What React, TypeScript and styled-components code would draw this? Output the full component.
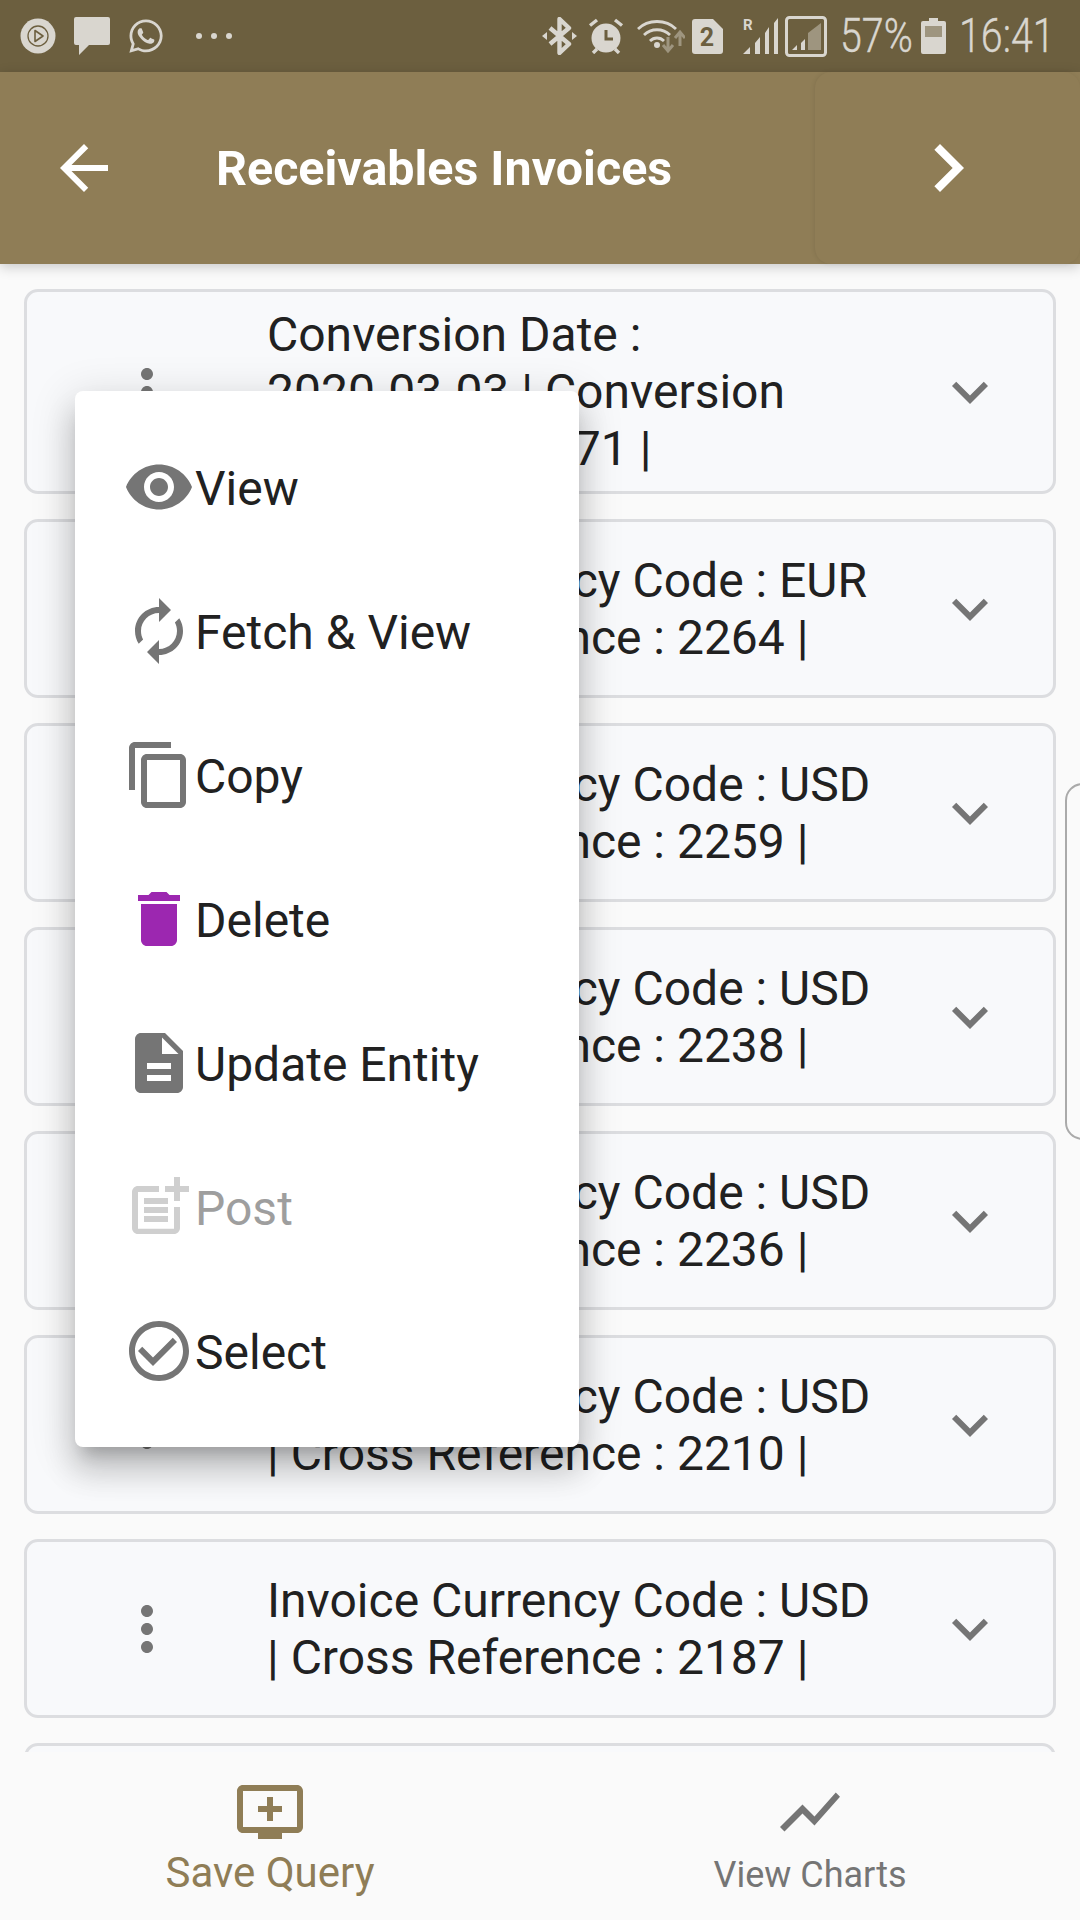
import React from "react";
import styled, { createGlobalStyle } from "styled-components";
import { FaWhatsapp } from "react-icons/fa";

const Global = createGlobalStyle`
  html, body { margin: 0; padding: 0; background: #fafafa; }
  * { box-sizing: border-box; }
`;

const STATUS_BG = "#6c5f3f";
const STATUS_FG = "#d9d6cf";
const STATUS_DIM = "#9e957f";
const BRAND = "#8f7d56";
const ICON_GREY = "#757575";

const Screen = styled.div`
  position: relative;
  width: 1080px;
  height: 1920px;
  overflow: hidden;
  display: flex;
  flex-direction: column;
  background: #fafafa;
  font-family: Roboto, "Noto Sans", sans-serif;
  color: #212121;
`;

const StatusBar = styled.div`
  flex: none;
  height: 72px;
  display: flex;
  align-items: center;
  padding: 0 28px 0 20px;
  background: ${STATUS_BG};
  color: ${STATUS_FG};
`;

const StatusSlot = styled.span<{ $ml: number }>`
  display: block;
  flex: none;
  line-height: 0;
  margin-left: ${(p) => p.$ml}px;
`;

const Dots = styled.span`
  display: flex;
  gap: 9px;
  margin-left: 31px;
`;

const Dot = styled.i`
  display: block;
  width: 6px;
  height: 6px;
  border-radius: 50%;
  background: ${STATUS_FG};
`;

const StatusRight = styled.div`
  margin-left: auto;
  display: flex;
  align-items: center;
`;

const StatusText = styled.span<{ $w: number; $ml: number }>`
  display: block;
  flex: none;
  width: ${(p) => p.$w}px;
  margin-left: ${(p) => p.$ml}px;
  font-size: 48px;
  font-weight: 300;
  line-height: 72px;
  white-space: nowrap;
  -webkit-text-stroke: 0.4px ${STATUS_FG};
  transform: scaleX(0.82);
  transform-origin: left center;
`;

const Header = styled.header`
  position: relative;
  z-index: 2;
  flex: none;
  height: 192px;
  display: flex;
  align-items: center;
  background: ${BRAND};
  box-shadow: 0 3px 12px rgba(0, 0, 0, 0.2);
  color: #fff;
`;

const BackIcon = styled.svg`
  flex: none;
  width: 72px;
  height: 72px;
  margin-left: 48px;
  fill: #fff;
`;

const Title = styled.h1`
  margin: 0 0 0 96px;
  font-size: 48.4px;
  font-weight: 700;
  white-space: nowrap;
`;

const NextPane = styled.div`
  margin-left: auto;
  align-self: stretch;
  width: 265px;
  display: flex;
  align-items: center;
  justify-content: center;
  background: ${BRAND};
  border-radius: 16px;
  box-shadow: -1px 0 4px rgba(0, 0, 0, 0.08);
`;

const NextIcon = styled.svg`
  width: 96px;
  height: 96px;
  fill: #fff;
`;

const List = styled.main`
  flex: 1;
  min-height: 0;
  overflow: hidden;
  display: flex;
  flex-direction: column;
  gap: 25px;
  padding: 25px 24px 0;
`;

const Card = styled.article`
  flex: none;
  min-height: 179px;
  display: flex;
  align-items: center;
  padding: 14px 0;
  background: #f8f9fb;
  border: 3px solid #dcdde0;
  border-radius: 14px;
`;

const Kebab = styled.svg`
  flex: none;
  width: 72px;
  height: 72px;
  margin-left: 84px;
  fill: ${ICON_GREY};
`;

const CardText = styled.div`
  flex: none;
  width: 610px;
  margin-left: 84px;
  margin-right: 1px;
  font-size: 48px;
  line-height: 57px;
`;

const NoBreak = styled.span`
  white-space: nowrap;
`;

const Expand = styled.svg`
  flex: none;
  width: 72px;
  height: 72px;
  margin-left: 56px;
  fill: ${ICON_GREY};
`;

const BottomNav = styled.nav`
  position: relative;
  z-index: 2;
  flex: none;
  height: 168px;
  display: flex;
  background: #fafafa;
`;

const Tab = styled.div<{ $active?: boolean }>`
  flex: 1;
  display: flex;
  flex-direction: column;
  align-items: center;
  padding-top: 24px;
  color: ${(p) => (p.$active ? BRAND : ICON_GREY)};
`;

const TabIcon = styled.svg`
  flex: none;
  width: 72px;
  height: 72px;
  fill: currentColor;
`;

const TabLabel = styled.span<{ $active?: boolean }>`
  font-size: ${(p) => (p.$active ? 42 : 36)}px;
  line-height: 50px;
  margin-top: ${(p) => (p.$active ? 0 : 2)}px;
  white-space: nowrap;
`;

const Menu = styled.div`
  position: absolute;
  z-index: 3;
  left: 75px;
  top: 391px;
  width: 504px;
  height: 1056px;
  display: flex;
  flex-direction: column;
  justify-content: center;
  background: #fff;
  border-radius: 8px;
  box-shadow: 0 15px 15px -9px rgba(0, 0, 0, 0.2),
    0 24px 30px 3px rgba(0, 0, 0, 0.14), 0 9px 42px 6px rgba(0, 0, 0, 0.12);
`;

const MenuItem = styled.div<{ $disabled?: boolean }>`
  flex: none;
  height: 144px;
  display: flex;
  align-items: center;
  padding-left: 48px;
  font-size: 48px;
  color: ${(p) => (p.$disabled ? "#9e9e9e" : "#212121")};
`;

const MenuLabel = styled.span`
  margin-top: 2px;
`;

const MenuIcon = styled.svg<{ $color?: string; $flip?: boolean }>`
  flex: none;
  width: 72px;
  height: 72px;
  fill: ${(p) => p.$color ?? ICON_GREY};
  transform: ${(p) => (p.$flip ? "scaleX(-1)" : "none")};
`;

const ScrollHandle = styled.div`
  position: absolute;
  z-index: 1;
  right: -20px;
  top: 783px;
  width: 35px;
  height: 357px;
  background: #fafafa;
  border: 2px solid #aaa;
  border-radius: 18px;
`;

const invoices = [
  { code: "EUR", ref: 2264 },
  { code: "USD", ref: 2259 },
  { code: "USD", ref: 2238 },
  { code: "USD", ref: 2236 },
  { code: "USD", ref: 2210 },
  { code: "USD", ref: 2187 },
  { code: "USD", ref: 2180 },
];

const Row = ({ children }: { children: React.ReactNode }) => (
  <Card>
    <Kebab viewBox="0 0 24 24">
      <path d="M12 8c1.1 0 2-.9 2-2s-.9-2-2-2-2 .9-2 2 .9 2 2 2zm0 2c-1.1 0-2 .9-2 2s.9 2 2 2 2-.9 2-2-.9-2-2-2zm0 6c-1.1 0-2 .9-2 2s.9 2 2 2 2-.9 2-2-.9-2-2-2z" />
    </Kebab>
    <CardText>{children}</CardText>
    <Expand viewBox="0 0 24 24">
      <path d="M16.59 8.59L12 13.17 7.41 8.59 6 10l6 6 6-6z" />
    </Expand>
  </Card>
);

const menuItems = [
  {
    label: "View",
    d: "M12 4.5C7 4.5 2.73 7.61 1 12c1.73 4.39 6 7.5 11 7.5s9.27-3.11 11-7.5c-1.73-4.39-6-7.5-11-7.5zM12 17c-2.76 0-5-2.24-5-5s2.24-5 5-5 5 2.24 5 5-2.24 5-5 5zm0-8c-1.66 0-3 1.34-3 3s1.34 3 3 3 3-1.34 3-3-1.34-3-3-3z",
  },
  {
    label: "Fetch & View",
    flip: true,
    d: "M12 4V1L8 5l4 4V6c3.31 0 6 2.69 6 6 0 1.01-.25 1.97-.7 2.8l1.46 1.46C19.54 15.03 20 13.57 20 12c0-4.42-3.58-8-8-8zm0 14c-3.31 0-6-2.69-6-6 0-1.01.25-1.97.7-2.8L5.24 7.74C4.46 8.97 4 10.43 4 12c0 4.42 3.58 8 8 8v3l4-4-4-4v3z",
  },
  {
    label: "Copy",
    d: "M16 1H4c-1.1 0-2 .9-2 2v14h2V3h12V1zm3 4H8c-1.1 0-2 .9-2 2v14c0 1.1.9 2 2 2h11c1.1 0 2-.9 2-2V7c0-1.1-.9-2-2-2zm0 16H8V7h11v14z",
  },
  {
    label: "Delete",
    color: "#9c27b0",
    d: "M6 19c0 1.1.9 2 2 2h8c1.1 0 2-.9 2-2V7H6v12zM19 4h-3.5l-1-1h-5l-1 1H5v2h14V4z",
  },
  {
    label: "Update Entity",
    d: "M14 2H6c-1.1 0-1.99.9-1.99 2L4 20c0 1.1.89 2 1.99 2H18c1.1 0 2-.9 2-2V8l-6-6zm2 16H8v-2h8v2zm0-4H8v-2h8v2zm-3-5V3.5L18.5 9H13z",
  },
  {
    label: "Post",
    disabled: true,
    color: "#cfcfcf",
    d: "M17 19.22H5V7h7V5H5c-1.1 0-2 .9-2 2v12c0 1.1.9 2 2 2h12c1.1 0 2-.9 2-2v-7h-2v7.22zM19 2h-2v3h-3c.01.01 0 2 0 2h3v2.99c.01.01 2 0 2 0V7h3V5h-3V2zM7 9h8v2H7zM7 12v2h8v-2H7zM7 15h8v2H7z",
  },
  {
    label: "Select",
    d: "M16.59 7.58L10 14.17l-3.59-3.58L5 12l5 5 8-8zM12 2C6.48 2 2 6.48 2 12s4.48 10 10 10 10-4.48 10-10S17.52 2 12 2zm0 18c-4.42 0-8-3.58-8-8s3.58-8 8-8 8 3.58 8 8-3.58 8-8 8z",
  },
];

export default function App() {
  return (
    <Screen>
      <Global />
      <StatusBar>
        <StatusSlot $ml={0}>
          <svg width="36" height="36" viewBox="0 0 36 36">
            <circle cx="18" cy="18" r="17.5" fill={STATUS_FG} />
            <circle cx="18" cy="18" r="10" fill="none" stroke={STATUS_BG} strokeWidth="1.3" />
            <path d="M15 12.5l8 5.5-8 5.5z" fill="none" stroke={STATUS_BG} strokeWidth="1.6" strokeLinejoin="round" />
          </svg>
        </StatusSlot>
        <StatusSlot $ml={18}>
          <svg width="36" height="38" viewBox="0 0 36 38">
            <path d="M2 0h32a2 2 0 0 1 2 2v24a2 2 0 0 1-2 2H15L5 38V28H2a2 2 0 0 1-2-2V2a2 2 0 0 1 2-2z" fill={STATUS_FG} />
          </svg>
        </StatusSlot>
        <StatusSlot $ml={17}>
          <FaWhatsapp size={38} color={STATUS_FG} />
        </StatusSlot>
        <Dots>
          <Dot />
          <Dot />
          <Dot />
        </Dots>
        <StatusRight>
          <StatusSlot $ml={0}>
            <svg width="35" height="38" viewBox="0 0 35 38">
              <path d="M8 11l19 16-9.5 9V2L27 11 8 27" fill="none" stroke={STATUS_FG} strokeWidth="4.4" strokeLinejoin="round" />
              <path d="M0 19l5-4v8zM35 19l-5-4v8z" fill={STATUS_FG} />
            </svg>
          </StatusSlot>
          <StatusSlot $ml={11}>
            <svg width="36" height="36" viewBox="0 0 36 36">
              <circle cx="18" cy="20" r="14.5" fill={STATUS_FG} />
              <path d="M18 12v9h7" fill="none" stroke={STATUS_BG} strokeWidth="3" />
              <path d="M2 7.5L9 2M34 7.5L27 2M5 35l4-4M31 35l-4-4" fill="none" stroke={STATUS_FG} strokeWidth="3.4" />
            </svg>
          </StatusSlot>
          <StatusSlot $ml={13}>
            <svg width="48" height="36" viewBox="0 0 48 36">
              <path d="M1 11C11 1 29 1 39 11M7 17C14 10 26 10 33 17M13 23C17 19 23 19 27 23" fill="none" stroke={STATUS_FG} strokeWidth="2.8" />
              <circle cx="20" cy="27" r="3" fill={STATUS_FG} />
              <path d="M31 19v14M26 27l5 6 5-6M43 28V14M38 20l5-6 5 6" fill="none" stroke={STATUS_DIM} strokeWidth="3" />
            </svg>
          </StatusSlot>
          <StatusSlot $ml={7}>
            <svg width="31" height="35" viewBox="0 0 31 35">
              <path d="M3 0h18l10 10v22a3 3 0 0 1-3 3H3a3 3 0 0 1-3-3V3a3 3 0 0 1 3-3z" fill={STATUS_FG} />
              <text x="15" y="27" textAnchor="middle" fontFamily="Roboto, sans-serif" fontWeight="700" fontSize="25" fill={STATUS_BG}>2</text>
            </svg>
          </StatusSlot>
          <StatusSlot $ml={20}>
            <svg width="35" height="36" viewBox="0 0 35 36">
              <text x="0" y="12" fontFamily="Roboto, sans-serif" fontWeight="700" fontSize="15" fill={STATUS_FG}>R</text>
              <path d="M0 36l7-7v7zM12 25l5-6v17h-5zM22 15l4-6v27h-4zM31 5l4-5v36h-4z" fill={STATUS_FG} />
            </svg>
          </StatusSlot>
          <StatusSlot $ml={7}>
            <svg width="42" height="41" viewBox="0 0 42 41">
              <rect x="1.5" y="1.5" width="39" height="38" rx="3" fill="none" stroke={STATUS_FG} strokeWidth="3" />
              <path d="M7 34l5-5v5zM16 27l4-4v11h-4z" fill={STATUS_FG} />
              <path d="M23 34V17L36 7v27z" fill={STATUS_DIM} />
            </svg>
          </StatusSlot>
          <StatusText $w={70} $ml={13}>57%</StatusText>
          <StatusSlot $ml={11}>
            <svg width="25" height="36" viewBox="0 0 25 36">
              <path d="M8 0h9v3h6a2 2 0 0 1 2 2v29a2 2 0 0 1-2 2H2a2 2 0 0 1-2-2V5a2 2 0 0 1 2-2h6z" fill={STATUS_FG} />
              <rect x="4" y="8" width="17" height="11" fill={STATUS_DIM} />
            </svg>
          </StatusSlot>
          <StatusText $w={93} $ml={13}>16:41</StatusText>
        </StatusRight>
      </StatusBar>

      <Header>
        <BackIcon viewBox="0 0 24 24">
          <path d="M20 11H7.83l5.59-5.59L12 4l-8 8 8 8 1.41-1.41L7.83 13H20v-2z" />
        </BackIcon>
        <Title>Receivables Invoices</Title>
        <NextPane>
          <NextIcon viewBox="0 0 24 24">
            <path d="M10 6L8.59 7.41 13.17 12l-4.58 4.59L10 18l6-6z" />
          </NextIcon>
        </NextPane>
      </Header>

      <List>
        <Row>
          Conversion Date : <NoBreak>2020-03-03</NoBreak> | Conversion Rate : 1.1234571 |
        </Row>
        {invoices.map((inv) => (
          <Row key={inv.ref}>
            Invoice Currency Code : {inv.code} | Cross Reference : {inv.ref} |
          </Row>
        ))}
      </List>

      <BottomNav>
        <Tab $active>
          <TabIcon viewBox="0 0 24 24">
            <path d="M21 3H3c-1.11 0-2 .89-2 2v12c0 1.1.89 2 2 2h5v2h8v-2h5c1.1 0 2-.9 2-2V5c0-1.11-.9-2-2-2zm0 14H3V5h18v12zm-8-7V7h-2v3H8v2h3v3h2v-3h3v-2h-3z" />
          </TabIcon>
          <TabLabel $active>Save Query</TabLabel>
        </Tab>
        <Tab>
          <TabIcon viewBox="0 0 24 24">
            <path d="M3.5 18.49l6-6.01 4 4L22 6.92l-1.41-1.41-7.09 7.97-4-4L2 16.99z" />
          </TabIcon>
          <TabLabel>View Charts</TabLabel>
        </Tab>
      </BottomNav>

      <ScrollHandle />

      <Menu>
        {menuItems.map((m) => (
          <MenuItem key={m.label} $disabled={m.disabled}>
            <MenuIcon viewBox="0 0 24 24" $color={m.color} $flip={m.flip}>
              <path d={m.d} />
            </MenuIcon>
            <MenuLabel>{m.label}</MenuLabel>
          </MenuItem>
        ))}
      </Menu>
    </Screen>
  );
}
